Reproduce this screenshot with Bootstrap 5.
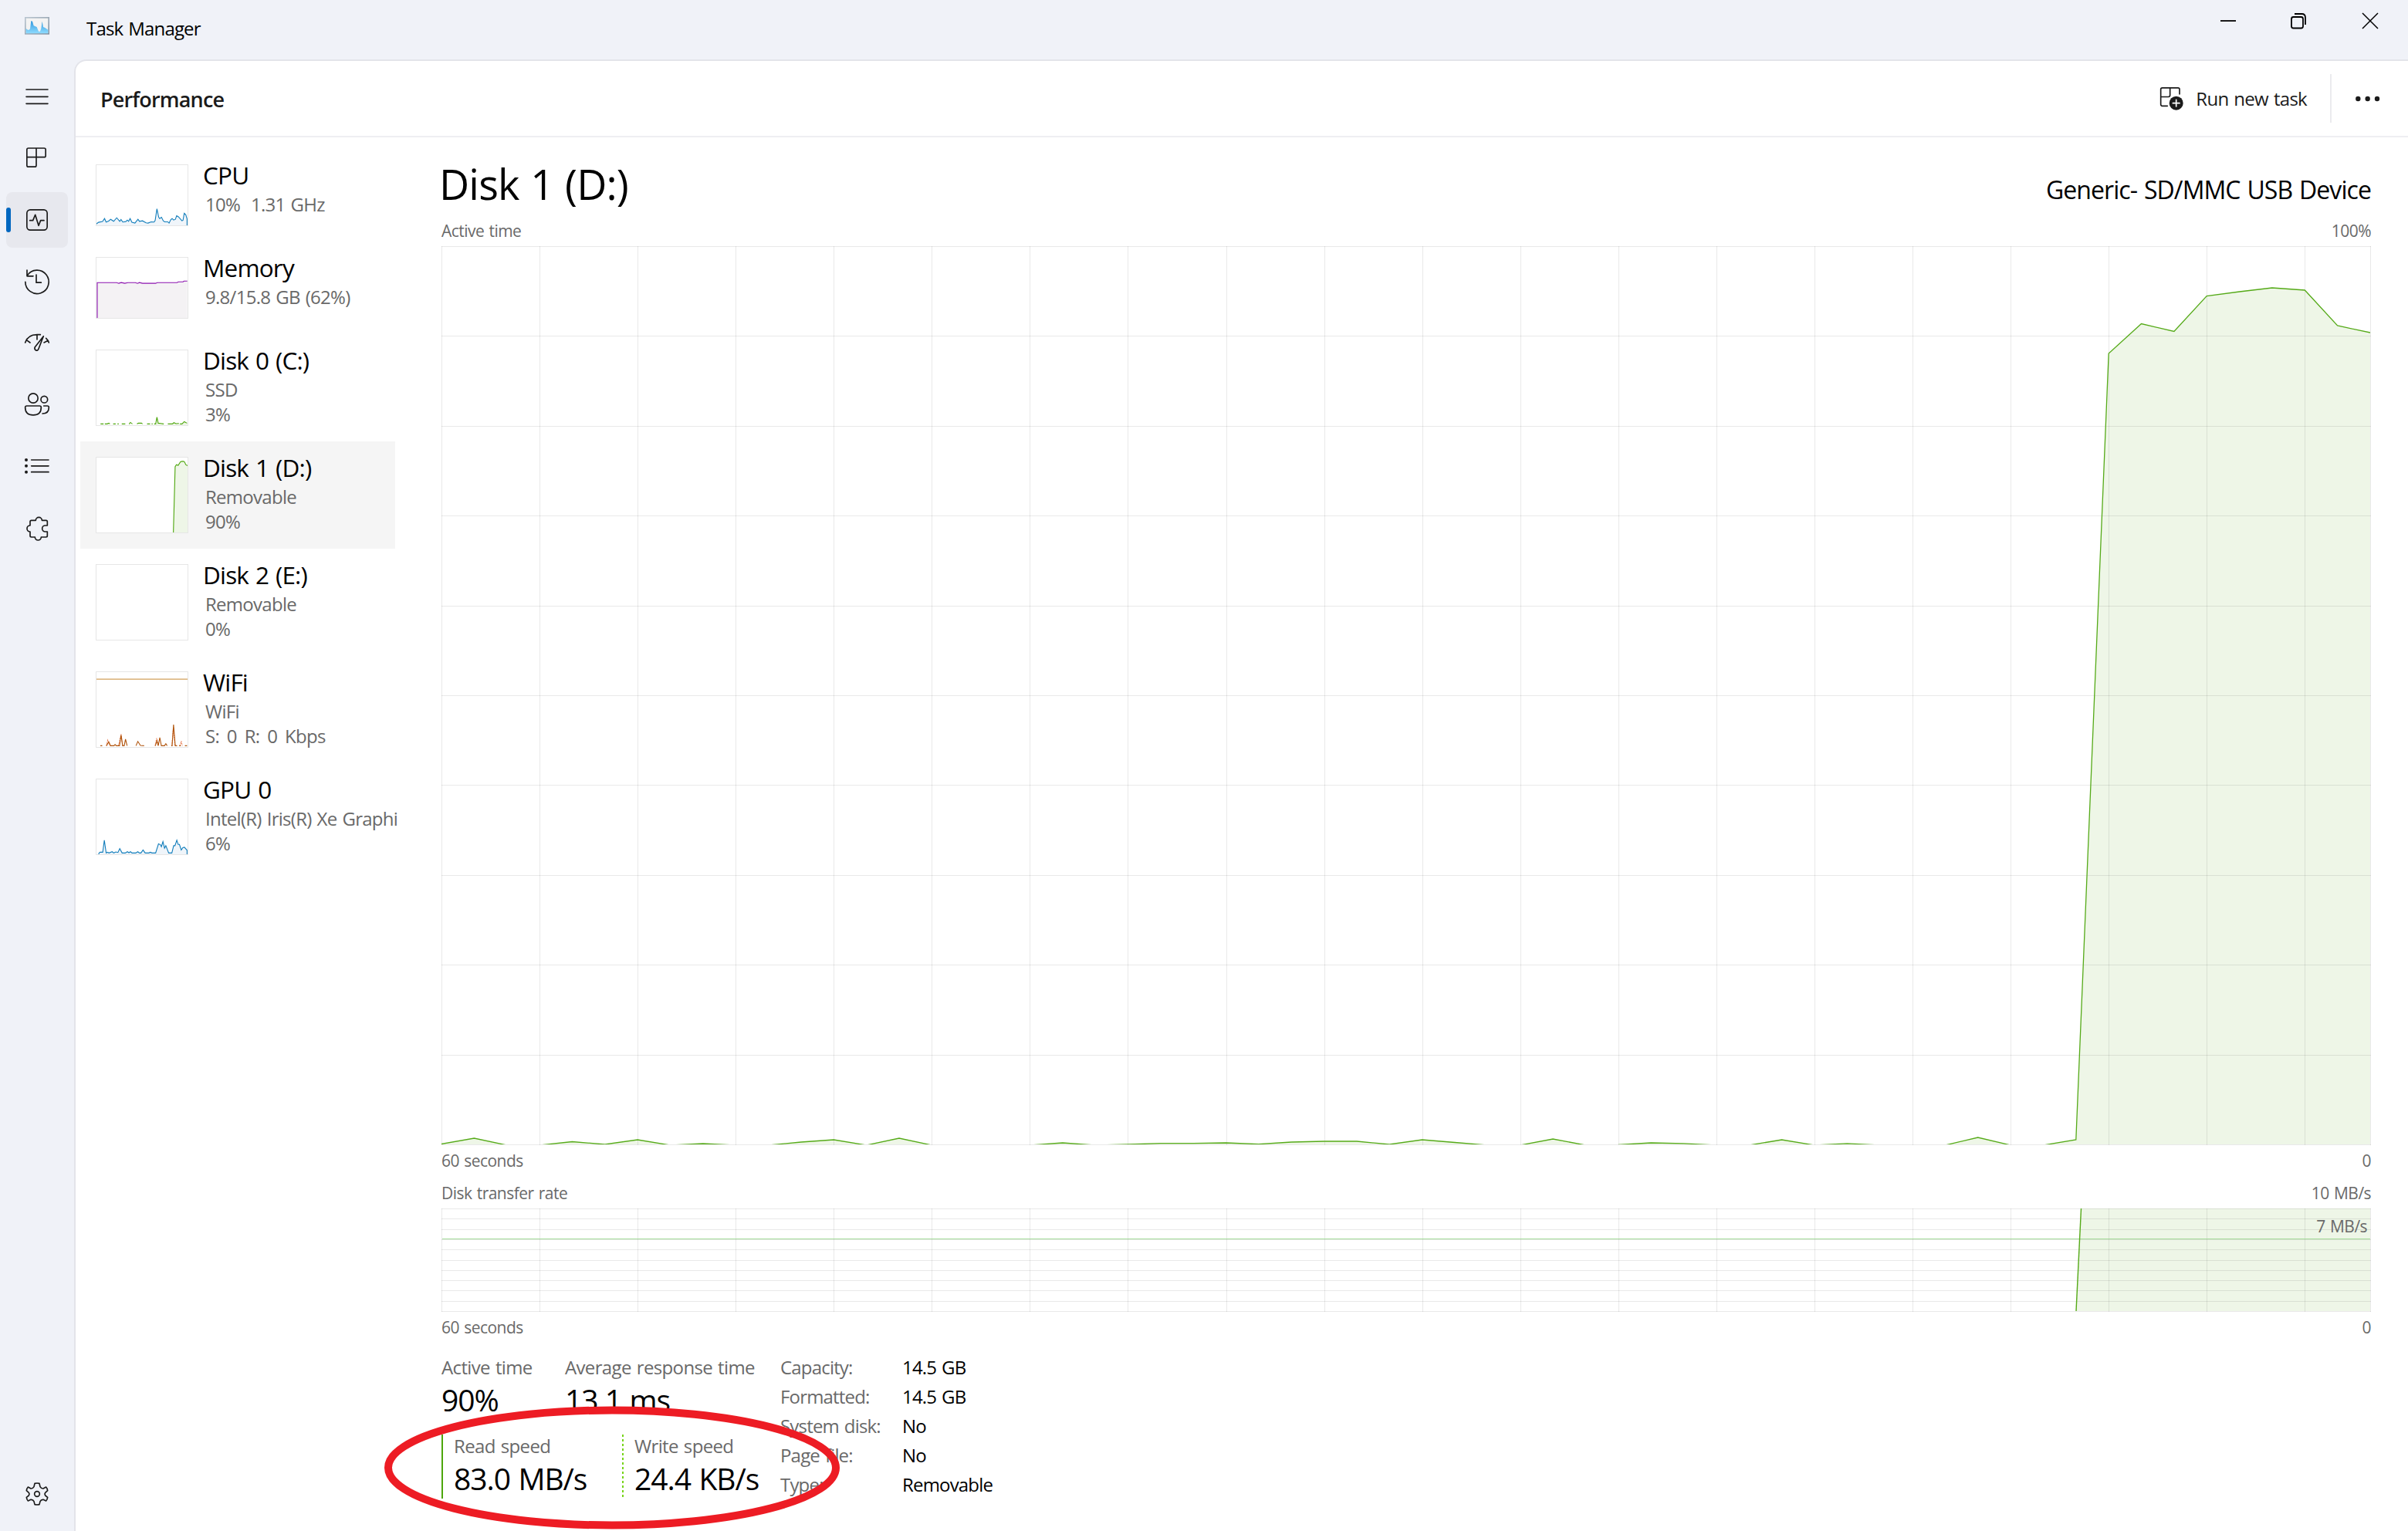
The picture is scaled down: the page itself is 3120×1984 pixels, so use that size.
<!DOCTYPE html>
<html lang="en">
<head>
<meta charset="utf-8">
<title>Task Manager</title>
<link href="https://cdn.jsdelivr.net/npm/bootstrap@5.3.0/dist/css/bootstrap.min.css" rel="stylesheet">
<style>
body{font-family:"Open Sans","Noto Sans",sans-serif;background:#f0f2f8;color:#000;font-size:24px;line-height:32px;letter-spacing:-.034em;word-spacing:.06em}
svg{display:block;flex:none}
.titlebar{height:77px}
.app-icon{width:32px;margin:0 32px}
.app-title{padding-top:21px}
.rail{width:96px;padding:12px 8px}
.rail-item{height:72px;border-radius:8px;position:relative}
.rail-item.active{background:#e7e8ee}
.rail-item.active::before{content:"";position:absolute;left:0;top:20px;width:6px;height:32px;border-radius:3px;background:#0067c0}
.ico{fill:none;stroke:#1b1b1b;stroke-width:5;stroke-linecap:round;stroke-linejoin:round}
.ico .solid{fill:#1b1b1b;stroke:none}
.work-area,.panel-body{min-height:0}
.panel{background:#fff;border:2px solid #e3e4ea;border-right:0;border-bottom:0;border-radius:16px 0 0 0}
.cmdbar{height:99px;border-bottom:2px solid #eeeef2;padding-left:32px;color:#1b1b1b}
.cmdbar h1{font-size:27px;line-height:36px;font-weight:600;margin:3px 0 0}
.run-label{margin:0 30px 0 15px;letter-spacing:-.03em}
.sep{width:2px;height:63px;background:#ebebee}
.devices{width:414px;padding:15px 0 0 6px}
.dev{padding:20px;width:408px;min-height:120px}
.dev.tall{min-height:139px}
.dev.active{background:#f5f5f5}
.dev .name{font-size:31.5px;line-height:40px;margin:-6px 0 2px}
.dev .sub{color:#696969;padding-left:3px;white-space:pre;letter-spacing:-.03em}
.dev .spaced{word-spacing:.18em}
.dev-text{margin:0 0 -3px 19px;width:228px}
.thumb{background:#fff;border:1px solid #e6e6e6;overflow:hidden}
.thumb path,.thumb polyline{vector-effect:non-scaling-stroke;stroke-width:1.1}
.main{padding:25px 48px 0 60px}
.main h2{font-size:54px;line-height:70px;margin:0 0 0 -3px;font-weight:400}
.model{font-size:32px;line-height:40px;margin-bottom:7px;letter-spacing:-.029em}
.cap{font-size:21px;line-height:30px;color:#696969;letter-spacing:-.026em}
.cap-1{margin-top:11px;margin-bottom:5px}
.cap-2{margin-top:5px}
.cap-3{margin-top:12px;margin-bottom:5px}
.rate-tag{right:5px;top:8px}
.stats{margin-top:18px}
.stats .lbl{color:#696969;letter-spacing:-.027em}
.stats .big{font-size:39px;line-height:44px;letter-spacing:-.027em}
.left-stats{width:439px;padding-top:3px}
.stat-active{width:160px}
.speeds{margin-top:23px}
.speed{height:83px;padding-left:14px}
.speed .lbl{line-height:30px;margin-bottom:5px}
.speed-read{border-left:2px solid #4da60c;width:234px}
.speed-write{padding-left:16px;background:repeating-linear-gradient(#77d419 0 3px,transparent 3px 6px) 0 0/2px 81px no-repeat}
.kv{line-height:38px}
.kv dt{width:158px;font-weight:400;color:#696969}
.kv dd{margin:0}
.ring{left:498px;top:1822px;z-index:5}
</style>
<script src="https://cdn.jsdelivr.net/npm/bootstrap@5.3.0/dist/js/bootstrap.bundle.min.js"></script>
</head>
<body class="vh-100 overflow-hidden d-flex flex-column position-relative">
<header class="titlebar d-flex">
  <svg class="app-icon mt-3" width="32" height="36" viewBox="96 48 96 108">
    <defs><linearGradient id="fr" x1="0" y1="0" x2="1" y2="1"><stop offset="0" stop-color="#b9c5d0"/><stop offset="1" stop-color="#8291a0"/></linearGradient>
    <linearGradient id="bl" x1="0" y1="0" x2="0" y2="1"><stop offset="0" stop-color="#2f97dd"/><stop offset="1" stop-color="#8fdcff"/></linearGradient></defs>
    <rect x="98.500" y="68.500" width="91" height="63" fill="#f3f3f3" stroke="url(#fr)" stroke-width="5"/>
    <path d="M101 111L108 116L113 116L117 112L121 81L126 83L131 100L143 105L150 122L156 122L160 110L164 83L168 105L175 108L187 116V130H101Z" fill="url(#bl)"/>
  </svg>
  <div class="app-title ms-3">Task Manager</div>
  <div class="ms-auto d-flex">
    <svg width="243" height="56" viewBox="2877 0 243 56" fill="none" stroke="#000" stroke-width="1.800">
      <path d="M2877 27H2897"/><rect x="2969" y="22" width="15" height="14.500" rx="2.500"/><path d="M2973 18H2982.500Q2987 18 2987 23V32"/><path d="M3061 17L3081 37M3081 17L3061 37" stroke-width="1.500"/>
    </svg>
  </div>
</header>
<div class="work-area d-flex flex-grow-1">
  <nav class="rail d-flex flex-column gap-2">
    <div class="rail-item d-flex align-items-center justify-content-center"><svg class="ico" width="40" height="40" viewBox="84 315 120 120"><path d="M102 348H186M102 376H186M102 403H186"/></svg></div>
    <div class="rail-item d-flex align-items-center justify-content-center"><svg class="ico" width="40" height="40" viewBox="84 555 120 120"><path d="M104.500 611V582a6 6 0 0 1 6-6H171.500a6 6 0 0 1 6 6V605a6 6 0 0 1-6 6H104.500V642.500a6 6 0 0 0 6 6H135a6 6 0 0 0 6-6V576"/></svg></div>
    <div class="rail-item active d-flex align-items-center justify-content-center"><svg class="ico" width="40" height="40" viewBox="84 795 120 120"><rect x="104.500" y="815.500" width="79" height="79" rx="13"/><path d="M116 857H128L137 835L150 877L158 857H171"/></svg></div>
    <div class="rail-item d-flex align-items-center justify-content-center"><svg class="ico" width="40" height="40" viewBox="84 1035 120 120"><path d="M98.500 1096A45.500 45.500 0 1 0 106 1071M105 1050V1073.500H129M141 1068V1098.500H160"/></svg></div>
    <div class="rail-item d-flex align-items-center justify-content-center"><svg class="ico" width="40" height="40" viewBox="84 75 120 120"><path d="M98 132Q108 101 144 101H157M103 122L117 132M144 102V120M169 107L136 149C131 162 146 168 150 156ZM179 115Q187 122 190 132M187 124L171 132"/></svg></div>
    <div class="rail-item d-flex align-items-center justify-content-center"><svg class="ico" width="40" height="40" viewBox="84 315 120 120"><circle cx="129" cy="348" r="18.500"/><circle cx="172" cy="353" r="13"/><path d="M104 378H154Q160 378 160 384C160 404 148 413.500 129 413.500S98 404 98 384Q98 378 104 378ZM170 378H184Q190 378 190 384C190 400 180 408 165 408"/></svg></div>
    <div class="rail-item d-flex align-items-center justify-content-center"><svg class="ico" width="40" height="40" viewBox="84 555 120 120"><path d="M122 588H189M122 611.500H189M122 635H189"/><g class="solid"><circle cx="102" cy="588" r="6"/><circle cx="102" cy="611.500" r="6"/><circle cx="102" cy="635" r="6"/></g></svg></div>
    <div class="rail-item d-flex align-items-center justify-content-center"><svg class="ico" width="40" height="40" viewBox="84 795 120 120"><path d="M122 823H139A12 12 0 0 1 163 823H179Q184 823 184 828V843H176A12 12 0 0 0 176 867H184V883Q184 888 179 888H160A12 12 0 0 1 136 888H122Q117 888 117 883V867A12 12 0 0 1 117 843V828Q117 823 122 823Z"/></svg></div>
    <div class="rail-item mt-auto d-flex align-items-center justify-content-center"><svg class="ico" width="40" height="40" viewBox="84 108 120 120"><path d="M135 127Q144 125 153 127L156 140Q161 148 168 147L179 141Q184 146 185 155L176 163Q172 168 176 174L185 181Q184 190 179 195L168 190Q160 189 156 197L153 209Q144 211 135 209L132 197Q128 189 120 190L109 195Q104 190 103 181L112 174Q116 168 112 163L103 155Q104 146 109 141L120 147Q127 148 132 140Z"/><circle cx="144" cy="168" r="10"/></svg></div>
  </nav>
  <section class="panel flex-grow-1 d-flex flex-column">
    <div class="cmdbar d-flex align-items-center">
      <h1>Performance</h1>
      <div class="ms-auto d-flex align-items-center">
        <svg class="ico" width="32" height="32" viewBox="598 337 96 96"><path d="M676 367V348Q676 342.500 670 342.500H609Q603 342.500 603 348V407Q603 413 609 413H629M603 377.500H633Q639 377.500 639 371V343"/><circle class="solid" cx="663" cy="402" r="27"/><path d="M650 402H676M663 389V415" stroke="#fff"/></svg>
        <div class="run-label">Run new task</div>
        <div class="sep"></div>
        <svg width="99" height="10" viewBox="3021 122 99 10" fill="#1b1b1b"><circle cx="3055.300" cy="127" r="3.200"/><circle cx="3067.700" cy="127" r="3.200"/><circle cx="3080" cy="127" r="3.200"/></svg>
      </div>
    </div>
    <div class="panel-body d-flex flex-grow-1">
      <aside class="devices">
        <div class="dev d-flex">
          <svg class="thumb" width="120" height="80" viewBox="372 640 360 240" preserveAspectRatio="none"><path d="M372 874L380 868L396 865L404 853L410 867L420 863L428 856L440 864L452 850L464 864L469 857L476 867L488 865L494 859L499 864L505 853L512 868L524 871L536 856L542 864L554 862L568 870L576 871L588 866L600 867L604 860L611 814L618 848L622 853L629 848L636 862L642 866L654 866L659 871L666 857L671 853L677 859L684 856L689 842L696 846L710 862L714 860L719 832L725 838L730 854V884H366Z" fill="#f0f5fa" stroke="#117dbb"/></svg>
          <div class="dev-text"><div class="name">CPU</div><div class="sub">10%  1.31 GHz</div></div>
        </div>
        <div class="dev d-flex">
          <svg class="thumb" width="120" height="80" viewBox="372 1000 360 240" preserveAspectRatio="none"><path d="M374 1240V1099H452L460 1102L470 1099L484 1102L496 1099H526L534 1102L542 1099L554 1102H606L612 1099H690L696 1096H714L718 1093H731V1240Z" fill="#f4f2f4"/><polyline points="375,1240 375,1099 452,1099 460,1102 470,1099 484,1102 496,1099 526,1099 534,1102 542,1099 554,1102 606,1102 612,1099 690,1099 696,1096 714,1096 718,1093 731,1093" fill="none" stroke="#8b12ae"/></svg>
          <div class="dev-text"><div class="name">Memory</div><div class="sub">9.8/15.8 GB (62%)</div></div>
        </div>
        <div class="dev tall d-flex">
          <svg class="thumb" width="120" height="99" viewBox="372 159 360 297" preserveAspectRatio="none"><path d="M606 456L611 424L616 448L628 450L640 456ZM672 456L678 447L688 450L710 452L719 442L731 448V456Z" fill="#eef6e7"/><path d="M388 451H400M405 451H414L421 448L425 451M438 451H448M455 451H460M472 451H486M501 452L506 445L514 451M532 451L538 448H550L554 451M572 451H584M590 451H594M600 451H606L611 424L616 448L626 449L638 451M654 451H672L678 446L686 450L698 449M702 451H710L719 442L730 448" fill="none" stroke="#4da60c"/></svg>
          <div class="dev-text"><div class="name">Disk 0 (C:)</div><div class="sub">SSD</div><div class="sub">3%</div></div>
        </div>
        <div class="dev tall active d-flex">
          <svg class="thumb" width="120" height="99" viewBox="372 576 360 297" preserveAspectRatio="none"><path d="M676 873L683 612L688 604L695 607L704 593L710 591H716L720 593L725 604L735 609V880H676Z" fill="#eef6e7" stroke="#4da60c"/></svg>
          <div class="dev-text"><div class="name">Disk 1 (D:)</div><div class="sub">Removable</div><div class="sub">90%</div></div>
        </div>
        <div class="dev tall d-flex">
          <svg class="thumb" width="120" height="99"></svg>
          <div class="dev-text"><div class="name">Disk 2 (E:)</div><div class="sub">Removable</div><div class="sub">0%</div></div>
        </div>
        <div class="dev tall d-flex">
          <svg class="thumb" width="120" height="99" viewBox="360 270 348 297" preserveAspectRatio="none"><path d="M360 298H708" stroke="#d2a05a"/><path d="M398 563L403 540L412 563M444 563L454 516L460 563M584 563L590 532L597 563M648 563L654 490L660 563M679 563L684 544L688 563" fill="none" stroke="#e8825a" stroke-dasharray="2 1"/><path d="M375 562H382M398 562L407 547L414 562H427L431 557L436 562H448L454 520L460 562H466L471 536L477 562M511 562L518 545L528 561L542 562M585 562L591 543L596 562L602 530L608 562H620L625 554L630 562M646 562H649L654.500 478L661 562H668M676 562H682M698 562H706" fill="none" stroke="#b0540c"/></svg>
          <div class="dev-text"><div class="name">WiFi</div><div class="sub">WiFi</div><div class="sub spaced">S: 0 R: 0 Kbps</div></div>
        </div>
        <div class="dev tall d-flex">
          <svg class="thumb" width="120" height="99" viewBox="360 687 348 297" preserveAspectRatio="none"><path d="M366 992L370 979L374 976H384L390 928L397 979L402 976L408 979L420 974L426 979L434 975L442 977L449 962L458 979H470L478 974L484 978L490 974L496 979H510L518 974L524 979H530L538 967L546 979H560L566 976L572 979H586L597 943L604 946L608 954L614 934L620 960L625 950L636 979H648L655 950H660L667 928L672 945H677L684 967L690 958L696 956L706 968V992Z" fill="#f0f5fa" stroke="#117dbb"/></svg>
          <div class="dev-text"><div class="name">GPU 0</div><div class="sub">Intel(R) Iris(R) Xe Graphi</div><div class="sub">6%</div></div>
        </div>
      </aside>
      <main class="main flex-grow-1">
        <div class="d-flex justify-content-between align-items-end">
          <h2>Disk 1 (D:)</h2>
          <div class="model">Generic- SD/MMC USB Device</div>
        </div>
        <div class="cap cap-1 d-flex justify-content-between"><span>Active time</span><span>100%</span></div>
        <svg id="active" width="2500" height="1165"></svg>
        <div class="cap cap-2 d-flex justify-content-between"><span>60 seconds</span><span>0</span></div>
        <div class="cap cap-3 d-flex justify-content-between"><span>Disk transfer rate</span><span>10 MB/s</span></div>
        <div class="position-relative">
          <svg id="rate" width="2500" height="134"></svg>
          <div class="cap rate-tag position-absolute">7 MB/s</div>
        </div>
        <div class="cap cap-2 d-flex justify-content-between"><span>60 seconds</span><span>0</span></div>
        <div class="stats d-flex">
          <div class="left-stats">
            <div class="d-flex">
              <div class="stat-active"><div class="lbl mb-1">Active time</div><div class="big">90%</div></div>
              <div><div class="lbl mb-1">Average response time</div><div class="big">13.1 ms</div></div>
            </div>
            <div class="speeds d-flex">
              <div class="speed speed-read"><div class="lbl">Read speed</div><div class="big">83.0 MB/s</div></div>
              <div class="speed speed-write"><div class="lbl">Write speed</div><div class="big">24.4 KB/s</div></div>
            </div>
          </div>
          <dl class="kv mb-0">
            <div class="d-flex"><dt>Capacity:</dt><dd>14.5 GB</dd></div>
            <div class="d-flex"><dt>Formatted:</dt><dd>14.5 GB</dd></div>
            <div class="d-flex"><dt>System disk:</dt><dd>No</dd></div>
            <div class="d-flex"><dt>Page file:</dt><dd>No</dd></div>
            <div class="d-flex"><dt>Type:</dt><dd>Removable</dd></div>
          </dl>
        </div>
      </main>
    </div>
  </section>
</div>
<svg class="ring position-absolute" width="592" height="162"><ellipse cx="295" cy="80" rx="290" ry="74.500" fill="none" stroke="#ed1c24" stroke-width="10"/></svg>
<script>
const STEP = 2499 / 59;
function grid(w, h, rows) {
  let d = '';
  for (let k = 0; k < 20; k++) d += `M${Math.round(k * 3 * STEP) + .5} 0V${h}`;
  d += `M${w - .5} 0V${h}`;
  for (let r = 0; r <= rows; r++) d += `M0 ${Math.round(r * (h - 1) / rows) + .5}H${w}`;
  return `<path d="${d}" stroke="#000" stroke-opacity=".085" fill="none"/>`;
}
// heights of the 60 samples, in pixels above the axis
const load = [.5,8,-1,-1,3.500,0,6,-1,1,-1,-1,3,6,-1,8,-1,-1,-1,-1,2,-1,0,1.300,1.300,2,.3,3,4,4,0,6,2.500,-1,-1,7,-1,-.5,2,1.200,-1,-1,6,-1,1.200,-1,-1,-1,9,-1,-1,6,1025,1063.500,1053.500,1099.500,1105,1110,1107,1061,1052];
const pts = load.map((v, i) => `${(i * STEP).toFixed(1)},${1164 - v}`).join(' ');
document.getElementById('active').innerHTML = `<clipPath id="c1"><rect width="2499" height="1164"/></clipPath><g clip-path="url(#c1)"><polygon points="0,1170 ${pts} 2499,1170" fill="#eef6e7"/></g>${grid(2500,1165,10)}<g clip-path="url(#c1)"><polyline points="${pts}" fill="none" stroke="#55aa18" stroke-width="1.300"/></g>`;
document.getElementById('rate').innerHTML = `<path d="M2118 133L2124.500 0H2499V133Z" fill="#eef6e7"/>${grid(2500,134,10)}<path d="M1 39.500H2499" stroke="#a3db98"/><path d="M2118 133L2124.500 0" stroke="#55aa18" stroke-width="1.400"/>`;
</script>
</body>
</html>
